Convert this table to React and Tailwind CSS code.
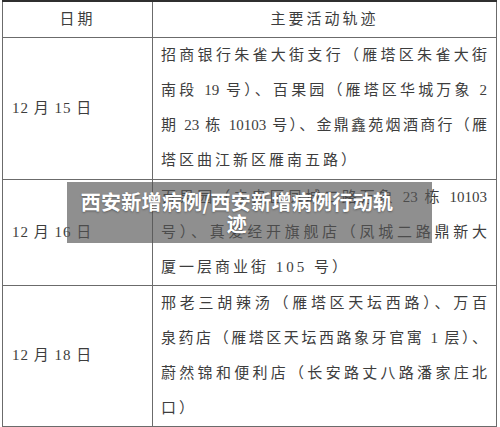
const rows = [
  {
    date: "12 月 15 日",
    h: "h-[142px]",
    lines: [
      "招商银行朱雀大街支行（雁塔区朱雀大街",
      "南段 19 号）、百果园（雁塔区华城万象 2",
      "期 23 栋 10103 号）、金鼎鑫苑烟酒商行（雁",
      "塔区曲江新区雁南五路）",
    ],
  },
  {
    date: "12 月 16 日",
    h: "h-[106px]",
    lines: [
      "百果园（未央区凤城二路万象 23 栋 10103",
      "号）、真爱经开旗舰店（凤城二路鼎新大",
      "厦一层商业街 105 号）",
    ],
  },
  {
    date: "12 月 18 日",
    h: "h-[141px]",
    lines: [
      "邢老三胡辣汤（雁塔区天坛西路）、万百",
      "泉药店（雁塔区天坛西路象牙官寓 1 层）、",
      "蔚然锦和便利店（长安路丈八路潘家庄北",
      "口）",
    ],
  },
];

function App() {
  return (
    <div className="relative w-[500px] h-[427px] bg-white overflow-hidden font-['Liberation_Serif','Noto_Sans_CJK_SC',serif] text-[15px] text-[#3d3d3d]">
      <table className="ml-[2px] w-[495px] border-collapse table-fixed">
        <thead>
          <tr className="h-[36px]">
            <th className="w-[150px] border border-[#6b6b6b] border-t-2 border-t-[#2f2f2f] font-normal tracking-[3px] text-center">
              日期
            </th>
            <th className="border border-[#6b6b6b] border-t-2 border-t-[#2f2f2f] font-normal tracking-[3px] text-center">
              主要活动轨迹
            </th>
          </tr>
        </thead>
        <tbody>
          {rows.map((r) => (
            <tr key={r.date} className={r.h}>
              <td className="border border-[#6b6b6b] pl-[9px] align-middle tracking-[1px] whitespace-nowrap">
                {r.date}
              </td>
              <td className="border border-[#6b6b6b] pl-[8px] pr-[9px] align-middle">
                {r.lines.map((l, i) => (
                  <div
                    key={i}
                    className={
                      "h-[35px] leading-[35px] whitespace-nowrap " +
                      (i < r.lines.length - 1 ? "[text-align-last:justify] text-justify" : "tracking-[3px]")
                    }
                  >
                    {l}
                  </div>
                ))}
              </td>
            </tr>
          ))}
        </tbody>
      </table>

      <div className="absolute left-[67px] top-[182px] w-[365px] h-[61px] bg-[rgba(85,85,85,0.66)] flex items-center pl-[6px]">
        <p className="w-[328px] text-center text-white font-bold text-[20px] leading-[22px] tracking-[0.3px] font-['Noto_Sans_CJK_SC',sans-serif] [text-shadow:0_1px_2px_rgba(0,0,0,0.35)]">
          西安新增病例/西安新增病例行动轨迹
        </p>
      </div>
    </div>
  );
}

export default App;
